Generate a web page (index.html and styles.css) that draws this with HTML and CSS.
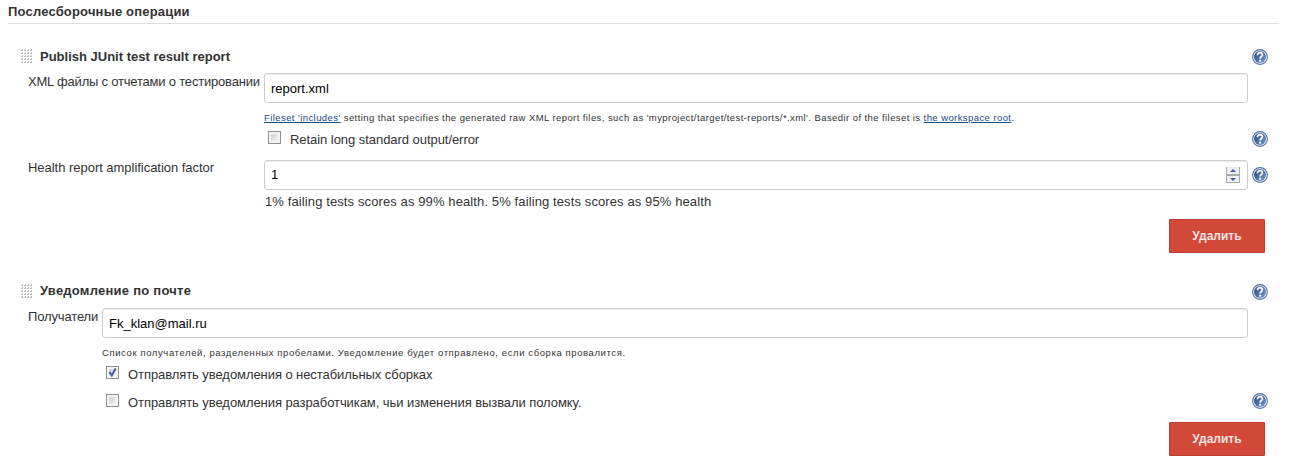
FILE: index.html
```html
<!DOCTYPE html>
<html lang="ru">
<head>
<meta charset="utf-8">
<title>Послесборочные операции</title>
<link rel="stylesheet" href="styles.css">
</head>
<body>
<svg class="defs" width="0" height="0" aria-hidden="true">
  <defs>
    <linearGradient id="blue" x1="0" y1="0" x2="1" y2="1"><stop offset="0" stop-color="#1c437f"/><stop offset="1" stop-color="#7b9ccb"/></linearGradient>
    <pattern id="dots" width="3" height="3" patternUnits="userSpaceOnUse"><path d="M0 1h2v1H0zM1 0h1v1H1z" fill="#bebcb8"/></pattern>
  </defs>
  <symbol id="help" viewBox="0 0 16 16">
    <circle cx="8" cy="8" r="7.4" fill="#fff" stroke="#4a70a5" stroke-width="1.1"/>
    <circle cx="8" cy="8" r="6" fill="url(#blue)"/>
    <path d="M5.5 6.2C5.4 2.9 10.5 3 10.4 5.8c0 1.7-2.3 1.7-2.3 3.8" fill="none" stroke="#fff" stroke-width="1.8"/>
    <path d="M7.1 10.7h2v1.9h-2z" fill="#fff"/>
  </symbol>
  <symbol id="grip" viewBox="0 0 12 15"><path d="M0 0h12v14H0z" fill="url(#dots)"/></symbol>
</svg>
<main class="page">
  <h1 class="heading"><span class="t-heading">Послесборочные операции</span></h1>

  <section class="block junit">
    <div class="title-row"><svg class="grip"><use href="#grip"/></svg><b class="t-junit">Publish JUnit test result report</b><svg class="help"><use href="#help"/></svg></div>
    <div class="field-row">
      <label class="label"><span class="t-xml">XML файлы с отчетами о тестировании</span></label>
      <div class="input"><span class="t-file">report.xml</span></div>
    </div>
    <div class="note"><span class="t-note"><a>Fileset 'includes'</a> setting that specifies the generated raw XML report files, such as 'myproject/target/test-reports/*.xml'. Basedir of the fileset is <a>the workspace root</a>.</span></div>
    <div class="check-row first"><i class="box"></i><span class="t-retain">Retain long standard output/error</span><svg class="help"><use href="#help"/></svg></div>
    <div class="field-row factor">
      <label class="label"><span class="t-health">Health report amplification factor</span></label>
      <div class="input"><span>1</span>
        <svg class="spinner" viewBox="0 0 14 16"><path d="M0 0h14v16H0z" fill="#aaa"/><path d="M1 0h12v7H1zM1 9h12v6H1z" fill="#f0f0f1"/><path d="M4 5h6L7 2zM4 11h6l-3 3z" fill="#485ba5"/></svg>
      </div>
      <svg class="help"><use href="#help"/></svg>
    </div>
    <div class="hint"><span class="t-hint">1% failing tests scores as 99% health. 5% failing tests scores as 95% health</span></div>
    <div class="actions"><button class="delete"><span class="t-delete">Удалить</span></button></div>
  </section>

  <section class="block mail">
    <div class="title-row"><svg class="grip"><use href="#grip"/></svg><b class="t-mail">Уведомление по почте</b><svg class="help"><use href="#help"/></svg></div>
    <div class="field-row">
      <label class="label"><span class="t-to">Получатели</span></label>
      <div class="input"><span class="t-addr">Fk_klan@mail.ru</span></div>
    </div>
    <div class="note"><span class="t-list">Список получателей, разделенных пробелами. Уведомление будет отправлено, если сборка провалится.</span></div>
    <div class="check-row"><i class="box"><svg viewBox="0 0 11 11"><path d="M2.4 5l2.4 3.4L8.7 1.6" fill="none" stroke="#4459a3" stroke-width="2"/></svg></i><span class="t-unstable">Отправлять уведомления о нестабильных сборках</span></div>
    <div class="check-row second"><i class="box"></i><span class="t-devs">Отправлять уведомления разработчикам, чьи изменения вызвали поломку.</span><svg class="help"><use href="#help"/></svg></div>
    <div class="actions"><button class="delete"><span class="t-delete">Удалить</span></button></div>
  </section>
</main>
</body>
</html>
```
FILE: styles.css
```css
* { box-sizing: border-box; }
body { margin: 0; background: #fff; color: #333; font: 13px/16px "Liberation Sans", Arial, sans-serif; }
.defs { position: absolute; }
.page { width: 1296px; height: 471px; overflow: hidden; white-space: nowrap; }
.heading { height: 24px; margin: 0 17px 0 8px; padding-top: 4px; border-bottom: 1px solid #ddd; font-size: 13px; line-height: 16px; }
.block { padding: 0 28px 0 21px; }
.junit { padding-top: 25px; --indent: 236px; }
.mail { padding-top: 31px; --indent: 74px; }
.title-row { display: flex; height: 16px; align-items: center; }
.grip { align-self: flex-start; width: 12px; height: 15px; margin-right: 7px; }
.help { flex: none; width: 16px; height: 16px; margin-left: auto; }
.field-row { display: flex; height: 30px; margin: 8px 0 0 7px; }
.label { flex: none; width: var(--indent); padding-top: 1px; }
.input { display: flex; align-items: center; width: calc(1220px - var(--indent)); height: 30px; padding: 2px 7px 0 6px; border: 1px solid #ccc; border-radius: 3px; box-shadow: inset 0 1px 1px #00000013; color: #000; }
.note { height: 14px; margin: 8px 0 0 calc(7px + var(--indent)); font-size: 9.5px; line-height: 14px; }
a { color: #204a87; text-decoration: underline; }
.check-row { display: flex; height: 16px; align-items: center; margin: 6px 0 0 calc(11px + var(--indent)); }
.check-row.first span { padding-top: 2px; }
.box { flex: none; width: 13px; height: 13px; margin: -3px 9px 0 0; border: 1px solid #8e8f8f; background: linear-gradient(135deg, #c9cdd3, #f6f6f6) 2px 2px / 7px 7px no-repeat #f4f4f4; }
.mail .box { margin-top: -5px; }
.box svg { display: block; width: 11px; height: 11px; }
.factor { margin-top: 13px; }
.factor .label { padding-top: 0; }
.factor .input { padding-top: 0; }
.factor .help { align-self: center; }
.spinner { width: 14px; height: 16px; margin-left: auto; }
.hint { height: 16px; margin: 4px 0 0 calc(8px + var(--indent)); }
.actions { display: flex; justify-content: flex-end; height: 34px; margin: 9px 3px 0 0; }
.delete { width: 96px; height: 34px; padding: 0; border: 1px solid #b93b2c; border-radius: 1px; background: #d24939; color: #f7e3e0; font: bold 12px/16px "Liberation Sans", Arial, sans-serif; }
.mail .title-row b { padding-bottom: 2px; }
.mail .field-row { margin-top: 8px; }
.mail .check-row { margin-top: 7px; }
.mail .check-row.second { margin-top: 12px; }
.mail .check-row .help { margin-top: -4px; }
.mail .actions { margin-top: 11px; }
.t-heading { letter-spacing: .18px; }
.t-xml { letter-spacing: -.2px; }
.t-note { letter-spacing: .42px; }
.t-retain { letter-spacing: -.05px; }
.t-health { letter-spacing: -.03px; }
.t-hint { letter-spacing: .11px; }
.t-mail { letter-spacing: .24px; }
.t-to { letter-spacing: -.14px; }
.t-list { letter-spacing: .6px; }
.t-unstable, .t-devs { letter-spacing: -.07px; }
```
